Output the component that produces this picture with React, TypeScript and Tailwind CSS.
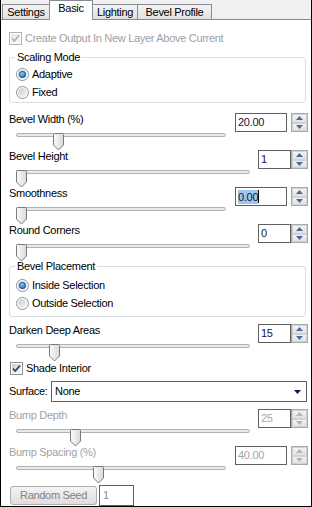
import React from 'react';

const font = "font-['Liberation_Sans',Arial,sans-serif]";

const tabs = [
    { name: 'Settings', w: 'w-[48px]' },
    { name: 'Basic', w: 'w-[44px]', active: true },
    { name: 'Lighting', w: 'w-[46px]' },
    { name: 'Bevel Profile', w: 'w-[75px]' },
];

const Checkbox: React.FC<{ checked?: boolean; disabled?: boolean }> = ({ checked, disabled }) => (
    <svg width="13" height="13" viewBox="0 0 13 13" className="shrink-0">
        <defs>
            <linearGradient id={disabled ? 'cbd' : 'cb'} x1="0" y1="0" x2="1" y2="1">
                <stop offset="0" stopColor={disabled ? '#e6e6e6' : '#cbcfd5'} />
                <stop offset="1" stopColor="#f7f7f7" />
            </linearGradient>
        </defs>
        <rect x="0.5" y="0.5" width="12" height="12" fill="#fff" stroke={disabled ? '#b1b1b1' : '#8e8f8f'} />
        <rect x="2" y="2" width="9" height="9" fill={`url(#${disabled ? 'cbd' : 'cb'})`} />
        {checked && (
            <path d="M3 6.5 L5.3 9 L10 3.5" fill="none" stroke={disabled ? '#a7b0c4' : '#2c3f70'} strokeWidth="1.8" />
        )}
    </svg>
);

const Radio: React.FC<{ checked?: boolean }> = ({ checked }) => (
    <svg width="13" height="13" viewBox="0 0 13 13" className="shrink-0">
        <defs>
            <linearGradient id="rb" x1="0" y1="0" x2="1" y2="1">
                <stop offset="0" stopColor="#c9cdd3" />
                <stop offset="1" stopColor="#f6f6f6" />
            </linearGradient>
            <radialGradient id="rd" cx="0.4" cy="0.35" r="0.7">
                <stop offset="0" stopColor="#8fd0ff" />
                <stop offset="1" stopColor="#1a5ea8" />
            </radialGradient>
        </defs>
        <circle cx="6.5" cy="6.5" r="6" fill="#fff" stroke="#8e8f8f" />
        <circle cx="6.5" cy="6.5" r="4.5" fill="url(#rb)" />
        {checked && <circle cx="6.5" cy="6.5" r="3.2" fill="url(#rd)" stroke="#1b4f8c" strokeWidth="0.8" />}
    </svg>
);

const Thumb: React.FC = () => (
    <svg width="11" height="18" viewBox="0 0 11 18">
        <defs>
            <linearGradient id="th" x1="0" y1="0" x2="1" y2="0">
                <stop offset="0" stopColor="#fbfbfb" />
                <stop offset="1" stopColor="#d9d9d9" />
            </linearGradient>
        </defs>
        <path d="M1.5 0.5 H9.5 Q10.5 0.5 10.5 1.5 V12 L5.5 17 L0.5 12 V1.5 Q0.5 0.5 1.5 0.5 Z" fill="url(#th)" stroke="#7a7a7a" />
    </svg>
);

const Slider: React.FC<{ width: string; pos: number }> = ({ width, pos }) => (
    <div className={`relative h-[18px] ml-[7px] ${width}`}>
        <div className="mt-[5px] h-[4px] rounded-[2px] border border-[#b3b3b3] bg-[#e7eaea]" />
        <div className="absolute top-0" style={{ left: pos }}>
            <Thumb />
        </div>
    </div>
);

const Spin: React.FC<{ disabled?: boolean }> = ({ disabled }) => {
    const c = disabled ? '#b5b5b5' : '#4f67a0';
    return (
        <div className="w-[17px] h-[19px] flex flex-col border border-[#a9a9a9] bg-white">
            <div className="flex-1 flex items-center justify-center border border-[#d2d2d2] bg-gradient-to-b from-[#f4f4f4] to-[#e2e2e2]">
                <svg width="7" height="4" viewBox="0 0 7 4"><path d="M0 4 L3.5 0 L7 4 Z" fill={c} /></svg>
            </div>
            <div className="flex-1 flex items-center justify-center border border-[#d2d2d2] bg-gradient-to-b from-[#f4f4f4] to-[#e2e2e2]">
                <svg width="7" height="4" viewBox="0 0 7 4"><path d="M0 0 L7 0 L3.5 4 Z" fill={c} /></svg>
            </div>
        </div>
    );
};

type Row = { label: string; value: string; wide?: boolean; pos: number; disabled?: boolean; selected?: boolean };

const SliderRow: React.FC<{ row: Row }> = ({ row }) => (
    <div className="flex h-[37px]">
        <div className="flex-1 flex flex-col">
            <div className={`leading-[13px] h-[13px] ${row.disabled ? 'text-[#a3a3a3]' : 'text-black'}`}>{row.label}</div>
            <div className="mt-[2px]">
                <Slider width={row.wide ? 'w-[210px]' : 'w-[234px]'} pos={row.pos} />
            </div>
        </div>
        <div className="flex items-start">
            <div
                className={`h-[19px] ${row.wide ? 'w-[52px] mr-[4px]' : 'w-[33px]'} border border-[#5f5f5f] bg-white pl-[2px] leading-[17px] ${
                    row.disabled ? 'text-[#9fa6ad]' : 'text-[#141438]'
                }`}
            >
                {row.selected ? (
                    <span className="flex items-center h-full">
                        <span className="bg-[#9cc8f0] leading-[14px]">{row.value}</span>
                        <span className="w-px h-[13px] bg-black" />
                    </span>
                ) : (
                    row.value
                )}
            </div>
            <Spin disabled={row.disabled} />
        </div>
    </div>
);

const Group: React.FC<{ label: string; h: string; children: React.ReactNode }> = ({ label, h, children }) => (
    <div className={`${h} w-[297px] border border-[#d5dfe5] rounded-[3px] flex flex-col`}>
        <div className="-mt-[7px] ml-[5px] px-[2px] bg-white w-fit leading-[13px] h-[13px]">{label}</div>
        {children}
    </div>
);

const RadioRow: React.FC<{ label: string; checked?: boolean }> = ({ label, checked }) => (
    <div className="h-[18px] flex items-center gap-[3px] ml-[6px]">
        <Radio checked={checked} />
        <span>{label}</span>
    </div>
);

const topRows: Row[] = [
    { label: 'Bevel Width (%)', value: '20.00', wide: true, pos: 37 },
    { label: 'Bevel Height', value: '1', pos: 0 },
    { label: 'Smoothness', value: '0.00', wide: true, pos: 0, selected: true },
    { label: 'Round Corners', value: '0', pos: 0 },
];

const App: React.FC = () => {
    return (
        <div className={`${font} text-[11px] tracking-[-0.3px] w-[312px] h-[507px] bg-white border-l border-r border-b border-black flex flex-col overflow-hidden`}>
            {/* tab strip */}
            <div className="h-[20px] shrink-0 flex items-end bg-[#f0f0f0] border-b border-[#898c95] pl-[1px]">
                {tabs.map((t) =>
                    t.active ? (
                        <div
                            key={t.name}
                            className={`${t.w} h-[20px] -mb-px -ml-px relative bg-white border border-b-0 border-[#898c95] text-center leading-[15px] text-black`}
                        >
                            {t.name}
                        </div>
                    ) : (
                        <div
                            key={t.name}
                            className={`${t.w} h-[15px] -ml-px first:ml-0 border border-b-0 border-[#898c95] bg-gradient-to-b from-[#f3f3f3] to-[#e1e1e1] text-center leading-[15px] text-black`}
                        >
                            {t.name}
                        </div>
                    )
                )}
            </div>

            <div className="flex flex-col pl-[8px] pr-[3px]">
                <div className="mt-[12px] h-[13px] flex items-center gap-[3px] text-[#a0a0a0]">
                    <Checkbox checked disabled />
                    <span>Create Output In New Layer Above Current</span>
                </div>

                <div className="mt-[12px]">
                    <Group label="Scaling Mode" h="h-[46px]">
                        <div className="mt-[1px]">
                            <RadioRow label="Adaptive" checked />
                            <RadioRow label="Fixed" />
                        </div>
                    </Group>
                </div>

                <div className="mt-[10px]">
                    {topRows.map((r) => (
                        <SliderRow key={r.label} row={r} />
                    ))}
                </div>

                <div className="mt-[5px]">
                    <Group label="Bevel Placement" h="h-[51px]">
                        <div className="mt-[3px]">
                            <RadioRow label="Inside Selection" checked />
                            <RadioRow label="Outside Selection" />
                        </div>
                    </Group>
                </div>

                <div className="mt-[7px]">
                    <SliderRow row={{ label: 'Darken Deep Areas', value: '15', pos: 33 }} />
                </div>

                <div className="mt-[1px] h-[13px] flex items-center gap-[3px] ml-px">
                    <Checkbox checked />
                    <span>Shade Interior</span>
                </div>

                <div className="mt-[6px] flex items-center">
                    <span className="w-[42px]">Surface:</span>
                    <div className="flex-1 mr-[1px] h-[21px] border border-[#5f5f5f] bg-white flex items-center justify-between pl-[3px] pr-[5px]">
                        <span>None</span>
                        <svg width="7" height="4" viewBox="0 0 7 4"><path d="M0 0 L7 0 L3.5 4 Z" fill="#0f1b4d" /></svg>
                    </div>
                </div>

                <div className="mt-[7px]">
                    <SliderRow row={{ label: 'Bump Depth', value: '25', pos: 54, disabled: true }} />
                    <SliderRow row={{ label: 'Bump Spacing (%)', value: '40.00', wide: true, pos: 77, disabled: true }} />
                </div>

                <div className="mt-[2px] flex items-center">
                    <div className="ml-px w-[87px] h-[19px] rounded-[3px] border border-[#adadad] bg-gradient-to-b from-[#f4f4f4] to-[#dedede] text-center leading-[17px] text-[#838383]">
                        Random Seed
                    </div>
                    <div className="ml-[2px] w-[35px] h-[21px] border border-[#5f5f5f] bg-white pl-[3px] leading-[19px] text-[#8a8aa0]">
                        1
                    </div>
                </div>
            </div>
        </div>
    );
};

export default App;
